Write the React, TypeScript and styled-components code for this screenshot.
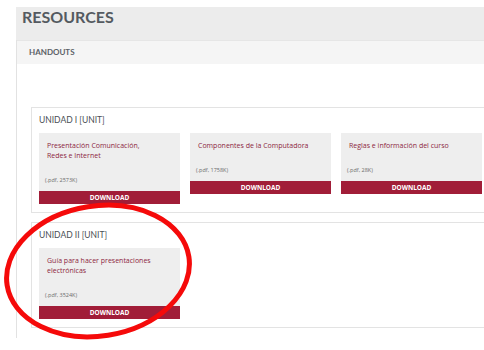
import styled, {createGlobalStyle} from 'styled-components';

type Resource = {title: string; meta: string};
type Unit = {name: string; items: Resource[]};

const units: Unit[] = [
    {
        name: 'UNIDAD I [UNIT]',
        items: [
            {title: 'Presentación Comunicación, Redes e Internet', meta: '(.pdf, 2573K)'},
            {title: 'Componentes de la Computadora', meta: '(.pdf, 1758K)'},
            {title: 'Reglas e información del curso', meta: '(.pdf, 28K)'},
        ],
    },
    {
        name: 'UNIDAD II [UNIT]',
        items: [
            {title: 'Guía para hacer presentaciones electrónicas', meta: '(.pdf, 3524K)'},
        ],
    },
]

const GlobalStyle = createGlobalStyle`
  html, body {
    margin: 0;
    padding: 0;
    background: #ffffff;
    overflow: hidden;
  }
  * {
    box-sizing: border-box;
  }
`

export default function App() {
    return (
        <Page>
            <GlobalStyle/>
            <Section>
                <Header>RESOURCES</Header>
                <Panel>
                    <PanelHeading>HANDOUTS</PanelHeading>
                    <PanelBody>
                        {units.map(unit => (
                            <UnitBox key={unit.name}>
                                <UnitTitle>{unit.name}</UnitTitle>
                                <CardRow>
                                    {unit.items.map(item => (
                                        <Card key={item.title}>
                                            <CardBody>
                                                <CardTitle>{item.title}</CardTitle>
                                                <CardMeta>{item.meta}</CardMeta>
                                            </CardBody>
                                            <DownloadBar>DOWNLOAD</DownloadBar>
                                        </Card>
                                    ))}
                                </CardRow>
                            </UnitBox>
                        ))}
                    </PanelBody>
                </Panel>
            </Section>
            <Annotation width="200" height="150" viewBox="0 0 200 150">
                <ellipse cx="98" cy="71" rx="92" ry="65"
                         fill="none" stroke="#f50a0a" strokeWidth="5"
                         transform="rotate(-9 98 71)"/>
            </Annotation>
        </Page>
    );
}

const Page = styled.div`
  position: relative;
  width: 484px;
  height: 350px;
  padding: 7px 0 0 16px;
  overflow: hidden;
`

const Section = styled.section`
  width: 490px;
`

const Header = styled.h1`
  margin: 0;
  height: 33px;
  padding: 1px 0 0 6px;
  background: #ececec;
  font-family: Lato, sans-serif;
  font-weight: 700;
  font-size: 16px;
  line-height: 18px;
  color: #545a60;
`

const Panel = styled.div`
  border-left: 1px solid #e2e2e2;
`

const PanelHeading = styled.h2`
  margin: 0;
  height: 24px;
  padding-left: 12px;
  border-top: 1px solid #e6e6e6;
  background: #f5f5f5;
  font-family: Lato, sans-serif;
  font-weight: 700;
  font-size: 8px;
  line-height: 23px;
  color: #5b6167;
`

const PanelBody = styled.div`
  padding: 43px 0 10px 14px;
  display: flex;
  flex-direction: column;
  gap: 9px;
`

const UnitBox = styled.div`
  border: 1px solid #e3e3e3;
  padding: 0 0 8px 7px;
`

const UnitTitle = styled.div`
  padding-top: 6px;
  margin-bottom: 7px;
  font-family: Lato, sans-serif;
  font-size: 8.5px;
  line-height: 12px;
  color: #4a4f55;
`

const CardRow = styled.div`
  display: flex;
  align-items: flex-start;
  gap: 10px;
`

const Card = styled.div`
  width: 141px;
  flex: none;
  background: #eeeeee;
`

const CardBody = styled.div`
  padding: 8px 8px 7px 6px;
`

const CardTitle = styled.div`
  max-width: 112px;
  margin-left: 2px;
  font-family: "Open Sans", sans-serif;
  font-size: 7px;
  line-height: 10px;
  color: #8d1f41;
`

const CardMeta = styled.div`
  margin-top: 15px;
  font-family: "Open Sans", sans-serif;
  font-size: 5.5px;
  line-height: 8px;
  color: #6a6a6a;
`

const DownloadBar = styled.div`
  height: 13px;
  background: #a11d38;
  color: #ffffff;
  text-align: center;
  font-family: "Open Sans", sans-serif;
  font-weight: 700;
  font-size: 6.5px;
  line-height: 13px;
`

const Annotation = styled.svg`
  position: absolute;
  left: 0;
  top: 200px;
  pointer-events: none;
`
